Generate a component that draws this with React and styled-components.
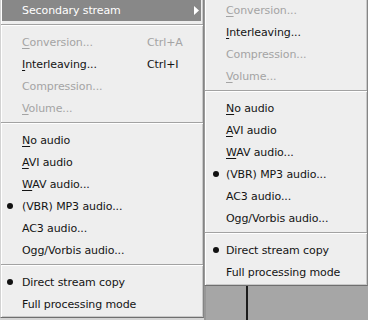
import React from 'react';
import styled, { createGlobalStyle } from 'styled-components';

const Global = createGlobalStyle`
  html, body { margin: 0; padding: 0; background: #d4d4d4; }
  body {
    width: 368px; height: 320px; overflow: hidden;
    font-family: "DejaVu Sans", Tahoma, "Liberation Sans", sans-serif;
  }
`;

const Screen = styled.div`
  display: flex;
  align-items: flex-start;
  width: 368px;
  height: 320px;
  overflow: hidden;
`;

const Menu = styled.div`
  box-sizing: border-box;
  width: ${p => p.$w}px;
  flex: none;
  margin-top: ${p => p.$top || 0}px;
  background: #eeeeee;
  border-left: 1px solid ${p => p.$edge};
  border-right: 1px solid #858585;
  border-bottom: 1px solid #6f6f6f;
  padding: 0 1px 2px 1px;
  box-shadow: inset 1px 0 0 #ffffff, inset -1px -1px 0 #c9c9c9;
`;

const Row = styled.div`
  display: grid;
  grid-template-columns: ${p => p.$cols};
  align-items: center;
  height: 22px;
  margin-right: ${p => (p.$active ? 1 : 0)}px;
  font-size: 11px;
  letter-spacing: -0.1px;
  white-space: nowrap;
  color: ${p => (p.$active ? '#ffffff' : p.$disabled ? '#a4a4a4' : '#141414')};
  background: ${p => (p.$active ? '#888888' : 'transparent')};
`;

const Check = styled.span`
  display: flex;
  align-items: center;
  padding-left: ${p => p.$inset}px;
`;

const Dot = styled.span`
  width: 6px;
  height: 6px;
  border-radius: 50%;
  background: #111;
`;

const Mn = styled.span`
  text-decoration: underline;
  text-underline-offset: 2px;
`;

const Key = styled.span``;

const Arrow = styled.span`
  display: flex;
  justify-content: flex-end;
  padding-right: 2px;
`;

const Sep = styled.div`
  height: 10px;
  position: relative;
  margin: 0 -1px;
  &::before {
    content: '';
    position: absolute;
    left: 0; right: 0; top: 3px;
    height: 1px;
    background: #a2a2a2;
    box-shadow: 0 1px 0 #ffffff;
  }
`;

const Side = styled.div`
  flex: 1;
  align-self: stretch;
  display: flex;
  flex-direction: column;
`;

const Desk = styled.div`
  flex: 1;
  display: flex;
  background: #a6a6a6;
  border-left: 2px solid #979797;
`;

const Pane = styled.div`
  width: 40px;
  border-right: 2px solid #1c1c1c;
`;

const audio = [
  { label: 'o audio', mn: 'N' },
  { label: 'VI audio', mn: 'A' },
  { label: 'AV audio...', mn: 'W' },
  { label: '(VBR) MP3 audio...', checked: true },
  { label: 'AC3 audio...' },
  { label: 'Ogg/Vorbis audio...' },
];

const top = [
  { mn: 'C', label: 'onversion...', key: 'Ctrl+A', disabled: true },
  { mn: 'I', label: 'nterleaving...', key: 'Ctrl+I' },
  { label: 'Compression...', disabled: true },
  { mn: 'V', label: 'olume...', disabled: true },
];

const modes = [
  { label: 'Direct stream copy', checked: true },
  { label: 'Full processing mode' },
];

function Items({ list, cols, inset }) {
  return list.map((it, i) => (
    <Row key={i} $cols={cols} $disabled={it.disabled}>
      <Check $inset={inset}>{it.checked && <Dot />}</Check>
      <span>
        {it.mn && <Mn>{it.mn}</Mn>}
        {it.label}
      </span>
      {it.key !== undefined && <Key>{it.key}</Key>}
    </Row>
  ));
}

export default function App() {
  const mainCols = '20px 125px 1fr';
  const subCols = '20px 1fr';
  return (
    <Screen>
      <Global />
      <Menu $w={204} $top={-1} $edge="#d2d2d2">
        <Row $cols={mainCols} $active>
          <span />
          <span>Secondary stream</span>
          <Arrow>
            <svg width="5" height="9" viewBox="0 0 5 9">
              <path d="M0 0 L5 4.5 L0 9 Z" fill="#ffffff" />
            </svg>
          </Arrow>
        </Row>
        <Sep />
        <Items list={top} cols={mainCols} inset={5} />
        <Sep />
        <Items list={audio} cols={mainCols} inset={5} />
        <Sep />
        <Items list={modes} cols={mainCols} inset={5} />
      </Menu>
      <Side>
        <Menu $w={164} $top={-1} $edge="#9a9a9a">
          <Items list={top.map(t => ({ ...t, key: undefined }))} cols={subCols} inset={7} />
          <Sep />
          <Items list={audio} cols={subCols} inset={7} />
          <Sep />
          <Items list={modes} cols={subCols} inset={7} />
        </Menu>
        <Desk>
          <Pane />
        </Desk>
      </Side>
    </Screen>
  );
}
